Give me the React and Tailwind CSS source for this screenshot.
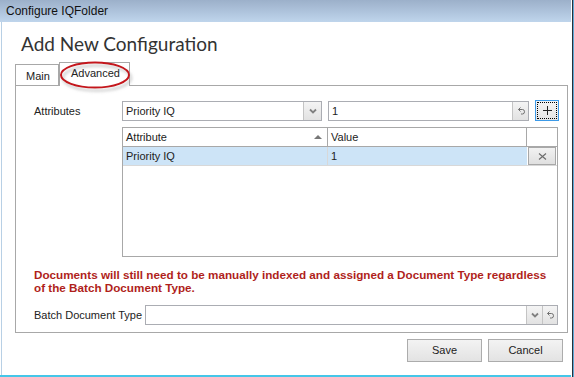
import React from 'react';

const FONT = "font-['Liberation_Sans',Arial,sans-serif]";

function Chevron() {
  return (
    <svg width="8" height="6" viewBox="0 0 8 6">
      <polyline points="1,1.5 4,4.5 7,1.5" fill="none" stroke="#808080" strokeWidth="1.8" />
    </svg>
  );
}

function Revert() {
  return (
    <svg width="10" height="10" viewBox="0 0 10 10">
      <path d="M2.5 3.5 H6.5 Q8.5 3.5 8.5 5.75 Q8.5 8 6.5 8 H5" fill="none" stroke="#707070" strokeWidth="1" />
      <path d="M4.5 1.5 L2.5 3.5 L4.5 5.5" fill="none" stroke="#707070" strokeWidth="1" />
    </svg>
  );
}

function SideBtn({ children, w = 'w-[17px]' }) {
  return (
    <div className={`${w} h-full border-l border-[#c4c4c4] bg-gradient-to-b from-[#f4f4f4] to-[#e2e2e2] flex items-center justify-center`}>
      {children}
    </div>
  );
}

export default function App() {
  return (
    <div className={`w-[574px] h-[377px] bg-white flex overflow-hidden text-[11px] text-[#222] ${FONT}`}>
      <div className="w-[571px] flex flex-col">
        {/* Title bar */}
        <div className="h-[22px] bg-gradient-to-b from-[#9cb0ca] to-[#bfd5ec] pl-[6px] text-[12px] leading-[22px] text-[#111]">
          Configure IQFolder
        </div>

        <div className="flex-1 flex flex-col ml-px border-l border-[#b8d0e5] relative">
          {/* Heading */}
          <div className="h-[40px] pl-[19px] pt-[10px] text-[19px] leading-[24px] text-[#333] font-['Lato',sans-serif]">
            Add New Configuration
          </div>

          {/* Tabs */}
          <div className="h-[23px] pl-[13px] flex items-end">
            <div className="h-[21px] w-[44px] border border-b-0 border-[#a8a8a8] bg-white pl-[10px] leading-[22px]">Main</div>
            <div className="h-[24px] w-[71px] -mb-px border border-b-0 border-[#a8a8a8] bg-white pl-[11px] leading-[21px] relative z-10">Advanced</div>
          </div>

          {/* Red highlight ellipse */}
          <svg className="absolute left-[54px] top-[37px] z-20" width="86" height="40" viewBox="0 0 86 40">
            <defs>
              <filter id="sh" x="-20%" y="-30%" width="140%" height="170%">
                <feDropShadow dx="2" dy="3" stdDeviation="1.8" floodColor="#888" floodOpacity="0.5" />
              </filter>
            </defs>
            <ellipse cx="39" cy="16" rx="34" ry="12.5" fill="none" stroke="#c4161c" strokeWidth="2" filter="url(#sh)" />
          </svg>

          {/* Panel */}
          <div className="ml-[13px] w-[553px] h-[248px] border border-[#a8a8a8] pl-[18px] pt-[15px] flex flex-col">
            {/* Attributes row */}
            <div className="flex h-[20px]">
              <div className="w-[88px] leading-[20px]">Attributes</div>
              <div className="w-[200px] h-full border border-[#abadb3] flex">
                <div className="flex-1 pl-[3px] leading-[18px]">Priority IQ</div>
                <SideBtn w="w-[18px]"><Chevron /></SideBtn>
              </div>
              <div className="ml-[6px] w-[201px] h-full border border-[#abadb3] flex">
                <div className="flex-1 pl-[3px] leading-[18px]">1</div>
                <SideBtn w="w-[16px]"><Revert /></SideBtn>
              </div>
              <div className="ml-[6px] w-[24px] h-[21px] -mt-px border border-[#3c9ae8] bg-gradient-to-b from-[#f4f4f4] to-[#e4e4e4] p-px">
                <div className="w-full h-full border border-dotted border-black flex items-center justify-center">
                  <svg width="9" height="9" viewBox="0 0 9 9">
                    <path d="M4.5 0 V9 M0 4.5 H9" stroke="#222" strokeWidth="1" />
                  </svg>
                </div>
              </div>
            </div>

            {/* Grid */}
            <div className="ml-[88px] mt-[6px] w-[436px] h-[130px] border border-[#a8a8a8]">
              <div className="flex h-[19px] border-b border-[#a8a8a8]">
                <div className="w-[205px] border-r border-[#a8a8a8] pl-[3px] leading-[19px] flex justify-between pr-[5px]">
                  <span>Attribute</span>
                  <svg className="mt-[7px]" width="8" height="4" viewBox="0 0 8 4"><polygon points="0,4 4,0 8,4" fill="#777" /></svg>
                </div>
                <div className="w-[199px] border-r border-[#a8a8a8] pl-[3px] leading-[19px]">Value</div>
                <div className="flex-1" />
              </div>
              <div className="flex h-[19px] bg-[#cde4f7] border-b border-[#d8d8d8]">
                <div className="w-[205px] border-r border-[#d8d8d8] pl-[3px] leading-[18px]">Priority IQ</div>
                <div className="w-[199px] pl-[3px] leading-[18px]">1</div>
                <div className="flex-1 pl-px pr-px bg-white">
                  <div className="h-[18px] border border-[#a8a8a8] bg-gradient-to-b from-[#f2f2f2] to-[#e0e0e0] flex items-center justify-center">
                    <svg width="9" height="7" viewBox="0 0 9 7">
                      <path d="M1 0.5 L8 6.5 M8 0.5 L1 6.5" stroke="#6b6b6b" strokeWidth="1.1" />
                    </svg>
                  </div>
                </div>
              </div>
            </div>

            {/* Warning */}
            <div className="mt-[11px] h-[26px] font-bold text-[11.7px] text-[#b01f1c] leading-[13px] whitespace-nowrap">
              Documents will still need to be manually indexed and assigned a Document Type regardless<br />
              of the Batch Document Type.
            </div>

            {/* Batch Document Type */}
            <div className="flex h-[20px] mt-[11px]">
              <div className="w-[111px] leading-[20px]">Batch Document Type</div>
              <div className="w-[413px] h-full border border-[#abadb3] flex">
                <div className="flex-1" />
                <SideBtn w="w-[16px]"><Chevron /></SideBtn>
                <SideBtn w="w-[15px]"><Revert /></SideBtn>
              </div>
            </div>
          </div>

          {/* Buttons */}
          <div className="mt-[6px] flex justify-end gap-[6px] pr-[8px]">
            <button className="w-[75px] h-[23px] border border-[#acacac] bg-gradient-to-b from-[#f3f3f3] to-[#e3e3e3] text-[11px]">Save</button>
            <button className="w-[75px] h-[23px] border border-[#acacac] bg-gradient-to-b from-[#f3f3f3] to-[#e3e3e3] text-[11px]">Cancel</button>
          </div>

          <div className="flex-1" />
          <div className="h-[2px] bg-[#45c6e8] -ml-[2px]" />
        </div>
      </div>
      <div className="w-px bg-[#ffffff]" />
      <div className="w-px bg-[#26323c]" />
      <div className="w-px bg-[#5fa8d6]" />
    </div>
  );
}
